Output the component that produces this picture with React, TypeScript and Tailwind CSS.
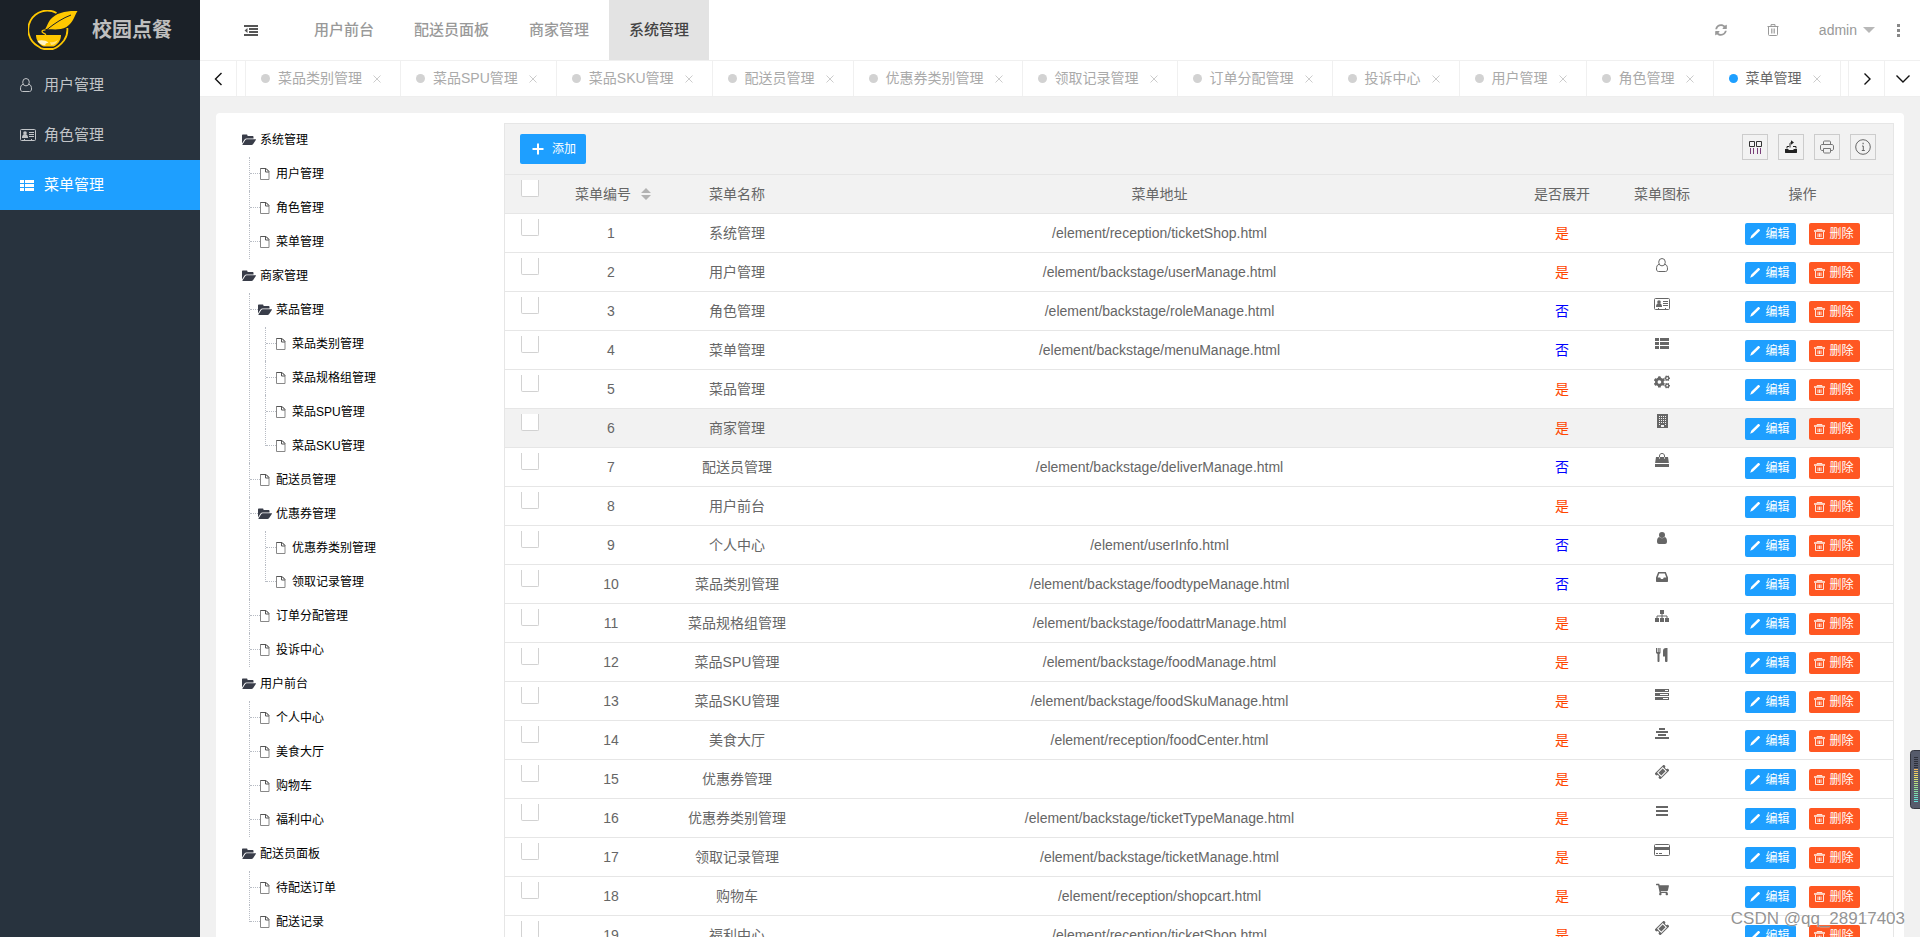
import type { ReactNode } from 'react'
import { FaCogs, FaShoppingCart, FaSyncAlt } from 'react-icons/fa'

const UserOutlineIcon = () => (
    <svg width="12" height="14" viewBox="0 0 12 14" fill="none" stroke="currentColor">
        <ellipse cx="6" cy="4.2" rx="3.3" ry="3.7" />
        <path d="M3 6.4C1.2 6.6.5 8.6.5 11c0 1.6.8 2.5 2 2.5h7c1.2 0 2-.9 2-2.5 0-2.4-.7-4.4-2.5-4.6" />
    </svg>
)

const CardIcon = () => (
    <svg width="16" height="12" viewBox="0 0 16 12" fill="currentColor">
        <rect x=".5" y=".5" width="15" height="11" rx="1" fill="none" stroke="currentColor" />
        <circle cx="5" cy="4" r="1.8" />
        <path d="M2 9C2 7 2.8 5.500 4 5.300h2c1.200.2 2 1.700 2 3.700zM9 3h5v1H9zM9 5h5v1H9zM9 7h5v1H9zM4 10h1v1H4zM11 10h1v1h-1z" />
    </svg>
)

const ListIcon = () => (
    <svg width="14" height="11" viewBox="0 0 14 11" fill="currentColor">
        <path d="M0 0h4v3H0zM5 0h9v3H5zM0 4h4v3H0zM5 4h9v3H5zM0 8h4v3H0zM5 8h9v3H5z" />
    </svg>
)

const BuildingIcon = () => (
    <svg width="11" height="14" viewBox="0 0 11 14" fill="currentColor" fillRule="evenodd">
        <path d="M0 0h11v14H0zM2 2v1h1V2zM4 2v1h1V2zM6 2v1h1V2zM8 2v1h1V2zM2 4v1h1V4zM4 4v1h1V4zM6 4v1h1V4zM8 4v1h1V4zM2 6v1h1V6zM4 6v1h1V6zM6 6v1h1V6zM8 6v1h1V6zM2 8v1h1V8zM4 8v1h1V8zM6 8v1h1V8zM8 8v1h1V8zM2 10v1h1v-1zM8 10v1h1v-1zM4 11v2h3v-2z" />
    </svg>
)

const BagIcon = () => (
    <svg width="14" height="14" viewBox="0 0 14 14" fill="currentColor">
        <path d="M1 4h12l.9 6H.1zM0 11h14v3H0z" />
        <path d="M4.500 5V3C4.500 1.300 5.500.500 7 .500s2.500.8 2.500 2.500v2" fill="none" stroke="currentColor" />
        <path d="M4.500 4v2M9.500 4v2" stroke="#fff" strokeWidth=".6" />
    </svg>
)

const PersonIcon = () => (
    <svg width="10" height="12" viewBox="0 0 10 12" fill="currentColor">
        <circle cx="5" cy="3" r="3" />
        <path d="M2.300 5C.7 5.300 0 7.200 0 9.500 0 11.200.8 12 2 12h6c1.200 0 2-.8 2-2.500C10 7.200 9.300 5.300 7.700 5 6.200 6.700 3.800 6.700 2.300 5z" />
    </svg>
)

const InboxIcon = () => (
    <svg width="12" height="10" viewBox="0 0 12 10" fill="currentColor" fillRule="evenodd">
        <path d="M2.200 0h7.600L12 5.500V9.300c0 .4-.3.7-.7.7H.7C.3 10 0 9.700 0 9.300V5.500zM3.200 1.500L1.700 5.500h2.500l.8 1.500h2l.8-1.500h2.500L8.800 1.500z" />
    </svg>
)

const SitemapIcon = () => (
    <svg width="14" height="12" viewBox="0 0 14 12" fill="currentColor">
        <path d="M5 0h4v4H5zM0 8h4v4H0zM5 8h4v4H5zM10 8h4v4h-4z" />
        <path d="M7 4v4M2 8V6h10v2" fill="none" stroke="currentColor" />
    </svg>
)

const CutleryIcon = () => (
    <svg width="12" height="14" viewBox="0 0 12 14" fill="currentColor">
        <path d="M0 0h1v4h.7V0h1v4h.7V0h1.100v4.500c0 .8-.5 1.300-1 1.500V13c0 .6-.4 1-1 1s-1-.4-1-1V6c-.5-.2-1.500-.7-1.500-1.500zM11.500 0v13c0 .6-.4 1-1.200 1s-1.300-.4-1.300-1V8.500H7V3c0-1.700 1-3 3-3z" />
    </svg>
)

const TasksIcon = () => (
    <svg width="14" height="11" viewBox="0 0 14 11" fill="currentColor" fillRule="evenodd">
        <path d="M0 0h14v3H0zM10 1v1h3V1zM0 4h14v3H0zM5 5v1h8V5zM0 8h14v3H0zM8 9v1h5V9z" />
    </svg>
)

const AlignCenterIcon = () => (
    <svg width="14" height="11" viewBox="0 0 14 11" fill="currentColor">
        <path d="M4 0h6v2H4zM1 3h12v2H1zM3 6h8v2H3zM0 9h14v2H0z" />
    </svg>
)

const TicketIcon = () => (
    <svg width="14" height="14" viewBox="0 0 14 14" fill="currentColor" fillRule="evenodd">
        <path
            transform="rotate(-45 7 7)"
            d="M.5 3h13v2.500a1.500 1.500 0 0 0 0 3V11H.5V8.500a1.500 1.500 0 0 0 0-3zM3 4v6h8V4zM4 5h6v4H4z"
        />
    </svg>
)

const BarsIcon = () => (
    <svg width="12" height="10" viewBox="0 0 12 10" fill="currentColor">
        <path d="M0 0h12v2H0zM0 4h12v2H0zM0 8h12v2H0z" />
    </svg>
)

const CreditCardIcon = () => (
    <svg width="16" height="12" viewBox="0 0 16 12" fill="currentColor">
        <rect x=".5" y=".5" width="15" height="11" rx="1" fill="none" stroke="currentColor" />
        <path d="M1 3h14v3H1zM2 9h2v1H2zM5 9h3v1H5z" />
    </svg>
)

const OutdentIcon = () => (
    <svg width="14" height="11" viewBox="0 0 14 11" fill="currentColor">
        <path d="M0 0h14v2H0zM5 3h9v2H5zM5 6h9v2H5zM0 9h14v2H0zM3.500 3v5L.5 5.500z" />
    </svg>
)

const TrashIcon = () => (
    <svg width="12" height="12" viewBox="0 0 12 12" fill="none" stroke="currentColor">
        <path d="M.5 2.500h11M4 2V.6h4V2M1.500 3v7.500c0 .6.3 1 1 1h7c.7 0 1-.4 1-1V3" />
        <path d="M4.500 4.500v5M6 4.500v5M7.500 4.500v5" strokeWidth=".8" />
    </svg>
)

const DeleteIcon = () => (
    <svg width="11" height="10" viewBox="0 0 11 10" fill="none" stroke="#ffe6dc">
        <path d="M0 2h11" strokeWidth="1.600" />
        <path d="M3 1.500V.5h5v1M1.500 3v6.500h8V3M4 4.500v3.500M5.500 4.500v3.500M7 4.500v3.500" />
    </svg>
)

const PencilIcon = () => (
    <svg width="10" height="10" viewBox="0 0 10 10" fill="currentColor">
        <path d="M7.800.3c.5-.4 1-.3 1.400 0l.5.500c.4.400.4.900 0 1.300L3 8.600.2 9.800l1-3z" />
    </svg>
)

const FolderIcon = () => (
    <svg width="14" height="12" viewBox="0 0 14 12" className="-ml-0.5 bg-white" fill="#393d49">
        <path d="M0 9.500V1.500C0 .8.400.5 1 .5h3.500c.6 0 1 .4 1 1V2H10.500c.6 0 1 .4 1 1v1.500H4.500c-.8 0-1.500.4-2 1.100z" />
        <path d="M4.700 5.300H13.500c.5 0 .6.400.3.800L11 10.300c-.4.500-.9.800-1.500.800H.9c-.500 0-.6-.4-.3-.8L3.300 6.100c.3-.5.800-.8 1.400-.8z" />
    </svg>
)

const FileIcon = () => (
    <svg width="10" height="12" viewBox="0 0 10 12" fill="none" stroke="#555">
        <path d="M.5.500h5.500l3 3v8H.5z" stroke="#888" />
        <path d="M5.500 1v3h3.500M.5.500h5.500l3 3" />
    </svg>
)

const Chevron = ({ d }: { d: string }) => (
    <svg width="14" height="14" viewBox="0 0 14 14" fill="none" stroke="#111" strokeWidth="1.400">
        <path d={d} />
    </svg>
)

const Logo = () => (
    <svg width="50" height="40" viewBox="0 0 50 40" fill="#ffc800">
        <path d="M28.500 3A19 19 0 0 0 10 36.200Q13 39 16 39h9q6-2 11-8.500Q40 25 39.300 18" fill="none" stroke="#ffc800" strokeWidth="1.800" />
        <path d="M49.500 1C40 .5 28 2 22 10c-2.500 3.500-2.800 6-5 9.500 6-1 14 1.500 21.500-2.500C46 12 46 6 49.500 1z" />
        <path d="M43 5C35 8 27 13 19 19.500c-4 0-6 1.500-3.500 3.500 2 1 3 2 1 3" fill="none" stroke="#1b2128" strokeWidth="1" />
        <path d="M17.500 19.800c-4 .2-4.500 2-2 3.300 2.500 1 2.500 1.800 1.500 2.900" fill="none" stroke="#ffc800" strokeWidth="1.300" />
        <path d="M8 25h25c0 5-3 9.500-7.500 11.500h-10C11 34.500 8 30 8 25z" />
        <path d="M9.500 31c3-1.500 8-1 11 1.500-4 1-3 2-3 3-4-.5-6.500-2-8-4.500z" fill="#fff3c4" />
        <path d="M22 32c3 1 6-.5 8-2-1 3-4 5-7 5z" fill="#ffe27a" />
    </svg>
)

const menus = [
    { name: '用户管理', icon: <UserOutlineIcon /> },
    { name: '角色管理', icon: <CardIcon /> },
    { name: '菜单管理', icon: <ListIcon />, active: true },
]

const navs = ['用户前台', '配送员面板', '商家管理', '系统管理']

const tabs = [
    '菜品类别管理',
    '菜品SPU管理',
    '菜品SKU管理',
    '配送员管理',
    '优惠券类别管理',
    '领取记录管理',
    '订单分配管理',
    '投诉中心',
    '用户管理',
    '角色管理',
    '菜单管理',
]

type Node = { name: string; children?: Node[] }

const tree: Node[] = [
    { name: '系统管理', children: [{ name: '用户管理' }, { name: '角色管理' }, { name: '菜单管理' }] },
    {
        name: '商家管理',
        children: [
            {
                name: '菜品管理',
                children: [
                    { name: '菜品类别管理' },
                    { name: '菜品规格组管理' },
                    { name: '菜品SPU管理' },
                    { name: '菜品SKU管理' },
                ],
            },
            { name: '配送员管理' },
            { name: '优惠券管理', children: [{ name: '优惠券类别管理' }, { name: '领取记录管理' }] },
            { name: '订单分配管理' },
            { name: '投诉中心' },
        ],
    },
    {
        name: '用户前台',
        children: [{ name: '个人中心' }, { name: '美食大厅' }, { name: '购物车' }, { name: '福利中心' }],
    },
    { name: '配送员面板', children: [{ name: '待配送订单' }, { name: '配送记录' }] },
]

type Row = { name: string; url?: string; open: boolean; icon?: ReactNode; hover?: boolean }

const rows: Row[] = [
    { name: '系统管理', url: '/element/reception/ticketShop.html', open: true },
    { name: '用户管理', url: '/element/backstage/userManage.html', open: true, icon: <UserOutlineIcon /> },
    { name: '角色管理', url: '/element/backstage/roleManage.html', open: false, icon: <CardIcon /> },
    { name: '菜单管理', url: '/element/backstage/menuManage.html', open: false, icon: <ListIcon /> },
    { name: '菜品管理', open: true, icon: <FaCogs size={16} /> },
    { name: '商家管理', open: true, icon: <BuildingIcon />, hover: true },
    { name: '配送员管理', url: '/element/backstage/deliverManage.html', open: false, icon: <BagIcon /> },
    { name: '用户前台', open: true },
    { name: '个人中心', url: '/element/userInfo.html', open: false, icon: <PersonIcon /> },
    { name: '菜品类别管理', url: '/element/backstage/foodtypeManage.html', open: false, icon: <InboxIcon /> },
    { name: '菜品规格组管理', url: '/element/backstage/foodattrManage.html', open: true, icon: <SitemapIcon /> },
    { name: '菜品SPU管理', url: '/element/backstage/foodManage.html', open: true, icon: <CutleryIcon /> },
    { name: '菜品SKU管理', url: '/element/backstage/foodSkuManage.html', open: true, icon: <TasksIcon /> },
    { name: '美食大厅', url: '/element/reception/foodCenter.html', open: true, icon: <AlignCenterIcon /> },
    { name: '优惠券管理', open: true, icon: <TicketIcon /> },
    { name: '优惠券类别管理', url: '/element/backstage/ticketTypeManage.html', open: true, icon: <BarsIcon /> },
    { name: '领取记录管理', url: '/element/backstage/ticketManage.html', open: true, icon: <CreditCardIcon /> },
    { name: '购物车', url: '/element/reception/shopcart.html', open: true, icon: <FaShoppingCart size={13} /> },
    { name: '福利中心', url: '/element/reception/ticketShop.html', open: true, icon: <TicketIcon /> },
]

const Sidebar = () => {
    return (
        <aside className="w-[200px] shrink-0 bg-[#28333e] text-[#c2c5c8]">
            <div className="flex h-[60px] items-center bg-[#1b2128] pl-7">
                <Logo />
                <h1 className="ml-3.5 text-xl font-bold text-[#bfbfbf]">校园点餐</h1>
            </div>
            <nav>
                {menus.map((m) => (
                    <a
                        key={m.name}
                        href="#"
                        className={`flex h-[50px] items-center pl-5 text-[15px] ${m.active ? 'bg-[#1e9fff] text-white' : ''}`}
                    >
                        <span className="w-6">{m.icon}</span>
                        {m.name}
                    </a>
                ))}
            </nav>
        </aside>
    )
}

const Header = () => {
    return (
        <header className="flex h-[61px] shrink-0 border-b border-[#f0f0f0] bg-white">
            <button aria-label="收起菜单" className="mx-[26px] flex w-[50px] items-center justify-center text-[#555]">
                <OutdentIcon />
            </button>
            <nav className="-ml-2 flex flex-1 text-[15px] font-medium">
                {navs.map((n) => (
                    <a
                        key={n}
                        href="#"
                        className={`flex items-center px-5 ${n === '系统管理' ? 'bg-[#e3e3e3] text-[#444]' : 'text-[#999]'}`}
                    >
                        {n}
                    </a>
                ))}
            </nav>
            <div className="flex pr-5 text-[#999]">
                <button aria-label="刷新" className="flex w-[52px] items-center justify-center">
                    <FaSyncAlt size={12} />
                </button>
                <button aria-label="清除缓存" className="flex w-[52px] items-center justify-center">
                    <TrashIcon />
                </button>
                <button className="flex items-center pl-5 text-sm">
                    admin
                    <span className="ml-1.5 border-x-[6px] border-t-[6px] border-x-transparent border-t-[#b8b8b8]"></span>
                </button>
                <button aria-label="更多" className="ml-[22px] flex flex-col items-center justify-center gap-0.5">
                    <span className="size-[3px] bg-[#888]"></span>
                    <span className="size-[3px] bg-[#888]"></span>
                    <span className="size-[3px] bg-[#888]"></span>
                </button>
            </div>
        </header>
    )
}

const TabBar = () => {
    return (
        <div className="flex h-9 shrink-0 border-b border-[#eee] bg-white">
            <button aria-label="上一页" className="mr-2 flex w-[37px] items-center justify-center border-r border-[#f0f0f0]">
                <Chevron d="M10.500 1L4.500 7l6 6" />
            </button>
            <div className="flex flex-1 overflow-hidden border-l border-[#f0f0f0]">
                {tabs.map((t) => {
                    const active = t === '菜单管理'
                    return (
                        <div key={t} className="flex shrink-0 items-center border-r border-[#f0f0f0] pl-[15px] pr-[19px]">
                            <span className={`size-[9px] rounded-full ${active ? 'bg-[#1e9fff]' : 'bg-[#d2d2d2]'}`}></span>
                            <a href="#" className={`ml-2 pb-px text-sm ${active ? 'text-[#666]' : 'text-[#aaa]'}`}>
                                {t}
                            </a>
                            <button aria-label={`关闭${t}`} className="ml-[11px] text-[#ccc]">
                                <svg width="8" height="8" viewBox="0 0 8 8" stroke="currentColor">
                                    <path d="M.5.500l7 7M7.500.500l-7 7" />
                                </svg>
                            </button>
                        </div>
                    )
                })}
            </div>
            <button aria-label="下一页" className="flex w-9 items-center justify-center border-l border-[#f0f0f0]">
                <Chevron d="M4.500 1.500L10 7l-5.500 5.500" />
            </button>
            <button aria-label="更多标签" className="flex w-9 items-center justify-center border-l border-[#f0f0f0]">
                <Chevron d="M.5 3.500L7 10 13.500 3.500" />
            </button>
        </div>
    )
}

const TreeLabel = ({ node }: { node: Node }) => (
    <div className="flex h-[34px] items-center whitespace-nowrap">
        <span className="w-4 shrink-0">{node.children ? <FolderIcon /> : <FileIcon />}</span>
        {node.name}
    </div>
)

// fullLine keeps the dotted line running past the last child, down to the next root
const TreeBranch = ({ nodes, fullLine }: { nodes: Node[]; fullLine?: boolean }) => {
    return (
        <ul className="ml-[5px]">
            {nodes.map((n, i) => (
                <li key={n.name} className="flex">
                    <span
                        className={`w-[11px] shrink-0 border-l border-dotted border-[#b8bcc4] ${!fullLine && i === nodes.length - 1 ? 'h-[17px]' : ''}`}
                    >
                        <span className="block h-[17px] border-b border-dotted border-[#b8bcc4]"></span>
                    </span>
                    <div>
                        <TreeLabel node={n} />
                        {n.children && <TreeBranch nodes={n.children} />}
                    </div>
                </li>
            ))}
        </ul>
    )
}

const MenuTree = () => {
    return (
        <ul className="w-[288px] shrink-0 pl-7 text-xs text-black">
            {tree.map((n, i) => (
                <li key={n.name}>
                    <TreeLabel node={n} />
                    <TreeBranch nodes={n.children ?? []} fullLine={i < tree.length - 1} />
                </li>
            ))}
        </ul>
    )
}

const tools = [
    {
        name: '筛选列',
        icon: (
            <svg width="14" height="14" viewBox="0 0 14 14" fill="none" stroke="#333">
                <path d="M1.500 1.500h5v5h-5zM8.500 1.500h5v5h-5z" />
                <path d="M2.500 8v6M5.500 8v6M9.500 8v6M12.500 8v6" stroke="#7a3f7a" />
            </svg>
        ),
    },
    {
        name: '导出',
        icon: (
            <svg width="14" height="14" viewBox="0 0 14 14" fill="#222">
                <path d="M1 9h3l1 1h4l1-1h3v3.500c0 .3-.2.5-.5.500h-11c-.3 0-.5-.2-.5-.500z" />
                <path d="M3 8.500V6.500h2M9 6.500h3v2M6 7.500V4c0-1 .5-1.500 1.500-1.500" fill="none" stroke="#222" />
                <path d="M7 .3l3 2.200-3 2.200z" />
            </svg>
        ),
    },
    {
        name: '打印',
        icon: (
            <svg width="14" height="14" viewBox="0 0 14 14" fill="none" stroke="#777">
                <path d="M3.500 4V2c0-.6.400-1 1-1h5c.6 0 1 .4 1 1v2M3 10.500H2c-.8 0-1.500-.7-1.500-1.500V6c0-.8.7-1.500 1.500-1.500h10c.8 0 1.500.7 1.500 1.500v3c0 .8-.7 1.500-1.500 1.500h-1" />
                <path d="M3.500 8.500h7V12c0 .6-.4 1-1 1h-5c-.6 0-1-.4-1-1z" />
            </svg>
        ),
    },
    {
        name: '提示',
        icon: (
            <svg width="16" height="16" viewBox="0 0 16 16" fill="none" stroke="#666">
                <circle cx="8" cy="8" r="7.300" />
                <path d="M7 7h1.300v4.500M6.800 11.500h3" />
                <path d="M7.500 4.500h1.200" strokeWidth="1.300" />
            </svg>
        ),
    },
]

const Check = ({ label }: { label: string }) => (
    <input
        type="checkbox"
        aria-label={label}
        className="block h-[17px] w-[18px] appearance-none rounded-b-xs border border-t-0 border-[#d2d2d2] bg-white"
    />
)

const MenuTable = () => {
    return (
        <div className="min-w-0 flex-1 border border-[#e6e6e6]">
            <div className="flex h-[51px] items-start border-b border-[#e6e6e6] bg-[#f2f2f2] pl-[15px] pr-[17px] pt-2.5">
                <button className="flex h-[30px] w-[66px] items-center justify-center rounded-xs bg-[#1e9fff] pl-0.5 text-xs text-white">
                    <svg width="12" height="12" viewBox="0 0 12 12" stroke="currentColor" strokeWidth="2" className="mr-2">
                        <path d="M6 .500v11M.5 6h11" />
                    </svg>
                    添加
                </button>
                <div className="ml-auto flex gap-2.5">
                    {tools.map((t) => (
                        <button key={t.name} aria-label={t.name} className="flex size-[26px] items-center justify-center border border-[#ccc]">
                            {t.icon}
                        </button>
                    ))}
                </div>
            </div>
            <table className="w-full table-fixed border-separate border-spacing-0 text-center text-sm text-[#666] [&_td]:h-[39px] [&_td]:border-b [&_td]:border-[#e6e6e6] [&_td]:p-0 [&_th]:h-[39px] [&_th]:border-b [&_th]:border-[#e6e6e6] [&_th]:p-0 [&_th]:font-normal">
                <thead className="bg-[#f2f2f2]">
                    <tr>
                        <th className="w-[50px] align-top">
                            <div className="pl-4 pt-[5px]">
                                <Check label="全选" />
                            </div>
                        </th>
                        <th className="w-[112px]">
                            <div className="flex items-center justify-center gap-2.5 pl-1">
                                菜单编号
                                <svg width="10" height="12" viewBox="0 0 10 12" fill="#b2b2b2">
                                    <path d="M5 0l5 5H0zM5 12L0 7h10z" />
                                </svg>
                            </div>
                        </th>
                        <th className="w-[140px]">菜单名称</th>
                        <th>菜单地址</th>
                        <th className="w-[100px]">是否展开</th>
                        <th className="w-[100px]">菜单图标</th>
                        <th className="w-[181px]">操作</th>
                    </tr>
                </thead>
                <tbody>
                    {rows.map((r, i) => (
                        <tr key={i} className={r.hover ? 'bg-[#f2f2f2]' : ''}>
                            <td className="align-top">
                                <div className="pl-4 pt-[5px]">
                                    <Check label={r.name} />
                                </div>
                            </td>
                            <td>{i + 1}</td>
                            <td>{r.name}</td>
                            <td>{r.url}</td>
                            <td className={r.open ? 'text-[#ff4500]' : 'text-[#0000ff]'}>{r.open ? '是' : '否'}</td>
                            <td className="align-top">
                                <div className="flex h-6 items-center justify-center">{r.icon}</div>
                            </td>
                            <td>
                                <div className="flex justify-center gap-[13px] pr-px pt-px text-xs text-white">
                                    <button className="flex h-[22px] w-[51px] items-center justify-center gap-[5px] rounded-xs bg-[#1e9fff]">
                                        <PencilIcon />
                                        编辑
                                    </button>
                                    <button className="flex h-[22px] w-[51px] items-center justify-center gap-1 rounded-xs bg-[#ff5722]">
                                        <DeleteIcon />
                                        删除
                                    </button>
                                </div>
                            </td>
                        </tr>
                    ))}
                </tbody>
            </table>
        </div>
    )
}

const levelColors = ['#f0b860', '#f0c460', '#f0d060', '#f0dc60', '#e8e068', '#d8e070', '#c8e078', '#b8e080', '#a8e088', '#98e090', '#90e098', '#88e0a0', '#80e0a8', '#78e0b8', '#70e0c8', '#68e0d0', '#60e0d8']

const LevelWidget = () => (
    <svg width="10" height="59" viewBox="0 0 10 59" className="absolute right-0 top-[750px]">
        <rect x=".5" y=".5" width="14" height="58" rx="3" fill="#565b6b" stroke="#34363f" />
        {[0, 1, 2, 3, 4, 5].map((i) => (
            <rect key={i} x="4" y={7 + i * 2} width="4" height="1" fill="#2e303a" />
        ))}
        {levelColors.map((c, i) => (
            <rect key={c} x="4" y={19 + i * 2} width="4" height="1" fill={c} />
        ))}
    </svg>
)

const App = () => {
    return (
        <div className="relative flex h-screen overflow-hidden bg-[#f1f1f1] font-['Liberation_Sans','Noto_Sans_CJK_SC',sans-serif]">
            <Sidebar />
            <div className="flex min-w-0 flex-1 flex-col">
                <Header />
                <TabBar />
                <main className="min-h-0 flex-1 overflow-hidden px-4 pt-4">
                    <div className="flex items-start rounded-t bg-white pr-2.5 pt-2.5">
                        <MenuTree />
                        <MenuTable />
                    </div>
                </main>
            </div>
            <LevelWidget />
            <div className="pointer-events-none absolute bottom-1.5 right-[15px] text-[17px] leading-6 text-[#777]/80 [text-shadow:0_0_1px_#fff]">
                CSDN @qq_28917403
            </div>
        </div>
    )
}

export default App
